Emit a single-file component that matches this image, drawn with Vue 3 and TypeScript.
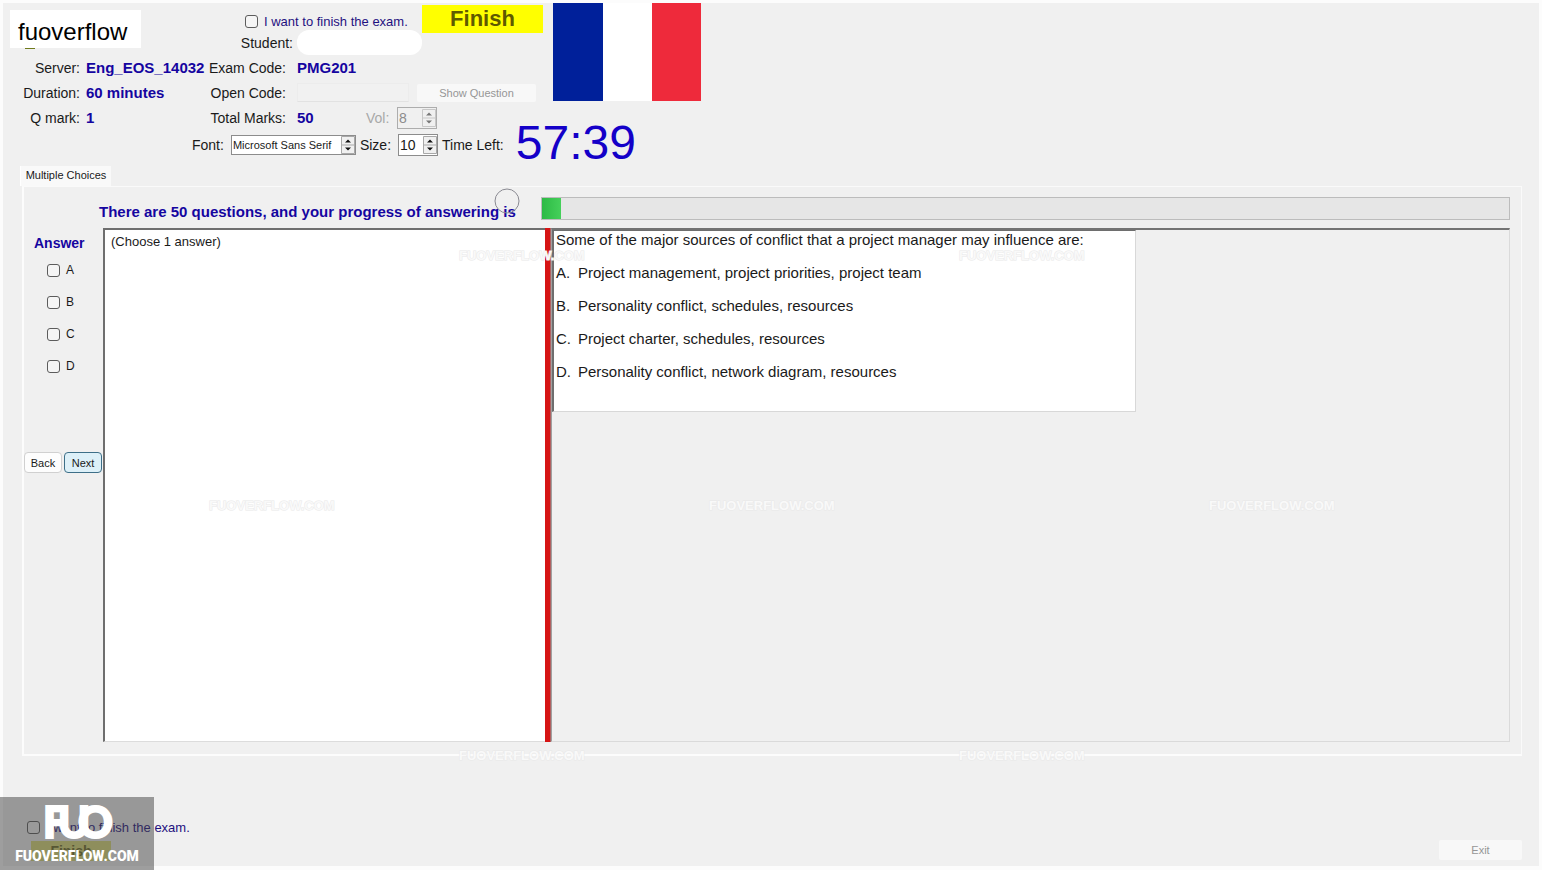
<script setup lang="ts">
import { ref } from 'vue'

interface Choice {
  key: string
  text: string
}

const choices: Choice[] = [
  { key: 'A', text: 'Project management, project priorities, project team' },
  { key: 'B', text: 'Personality conflict, schedules, resources' },
  { key: 'C', text: 'Project charter, schedules, resources' },
  { key: 'D', text: 'Personality conflict, network diagram, resources' },
]

const total = 50
const answered = ref(1)
const picked = ref<string[]>([])
const finishTop = ref(false)
const finishBottom = ref(false)
const volume = ref(8)
const fontSize = ref(10)
const fontName = ref('Microsoft Sans Serif')

const marks = [
  { x: 459, y: 256 },
  { x: 959, y: 256 },
  { x: 209, y: 506 },
  { x: 709, y: 506 },
  { x: 1209, y: 506 },
  { x: 459, y: 756 },
  { x: 959, y: 756 },
]
</script>

<template>
  <main class="window">
    <header class="header">
      <div class="top">
        <section class="col-server">
          <div class="brand">fuoverflow</div>
          <dl class="facts">
            <div><dt>Server:</dt><dd>Eng_EOS_14032</dd></div>
            <div><dt>Duration:</dt><dd>60 minutes</dd></div>
            <div><dt>Q mark:</dt><dd>1</dd></div>
          </dl>
        </section>

        <section class="col-exam">
          <div class="row row-finish">
            <label class="finish-check">
              <input v-model="finishTop" type="checkbox" />
              <span>I want to finish the exam.</span>
            </label>
            <button type="button" class="finish">Finish</button>
          </div>
          <div class="row row-student">
            <span class="label">Student:</span>
            <span class="student"></span>
          </div>
          <div class="row">
            <span class="label">Exam Code:</span>
            <strong>PMG201</strong>
          </div>
          <div class="row">
            <label class="label" for="open-code">Open Code:</label>
            <input id="open-code" class="open-code" type="text" disabled />
            <button type="button" class="flat show" disabled>Show Question</button>
          </div>
          <div class="row">
            <span class="label">Total Marks:</span>
            <strong class="marks">{{ total }}</strong>
            <label class="dim" for="vol">Vol:</label>
            <span class="spin off">
              <input id="vol" v-model="volume" type="number" disabled />
              <svg class="arrows" viewBox="0 0 14 18" aria-hidden="true">
                <path d="M0.5 0.5h13v17h-13zM0 9h14" class="edge" />
                <path d="M4 6.500h6L7 3.500zM4 11.500h6L7 14.500z" class="tri" />
              </svg>
            </span>
          </div>
        </section>

        <svg class="flag" viewBox="0 0 148 98" role="img" aria-label="Flag of France">
          <rect width="50" height="98" fill="#00209a" />
          <rect x="50" width="49" height="98" fill="#fff" />
          <rect x="99" width="49" height="98" fill="#ee2a3b" />
        </svg>
      </div>

      <div class="font-row">
        <label class="before" for="font-name">Font:</label>
        <span class="spin wide">
          <select id="font-name" v-model="fontName">
            <option>Microsoft Sans Serif</option>
          </select>
          <svg class="arrows" viewBox="0 0 14 18" aria-hidden="true">
            <path d="M0.5 0.5h13v17h-13zM0 9h14" class="edge" />
            <path d="M4 6.500h6L7 3.500zM4 11.500h6L7 14.500z" class="tri" />
          </svg>
        </span>
        <label class="before" for="font-size">Size:</label>
        <span class="spin">
          <input id="font-size" v-model="fontSize" type="number" />
          <svg class="arrows" viewBox="0 0 14 18" aria-hidden="true">
            <path d="M0.5 0.5h13v17h-13zM0 9h14" class="edge" />
            <path d="M4 6.500h6L7 3.500zM4 11.500h6L7 14.500z" class="tri" />
          </svg>
        </span>
        <span>Time Left:</span>
        <span class="clock">57:39</span>
      </div>
    </header>

    <div class="tabs" role="tablist">
      <button type="button" role="tab" aria-selected="true" class="tab">Multiple Choices</button>
    </div>

    <section class="panel" role="tabpanel">
      <div class="progress-row">
        <p class="progress-text">
          There are {{ total }} questions, and your progress of answering is
          <svg class="pointer" viewBox="0 0 26 26" aria-hidden="true">
            <circle cx="13" cy="13" r="12" fill="none" stroke="#8a8a92" />
          </svg>
        </p>
        <div class="bar" role="progressbar" :aria-valuenow="answered" :aria-valuemax="total">
          <div class="fill" :style="{ width: (answered / total) * 100 + '%' }"></div>
        </div>
      </div>

      <div class="body">
        <fieldset class="answers">
          <legend>Answer</legend>
          <label v-for="c in choices" :key="c.key">
            <input v-model="picked" type="checkbox" :value="c.key" />
            <span>{{ c.key }}</span>
          </label>
          <div class="nav">
            <button type="button">Back</button>
            <button type="button" class="next">Next</button>
          </div>
        </fieldset>
        <div class="prompt">(Choose 1 answer)</div>
        <div class="splitter"></div>
        <div class="view">
          <article class="question">
            <p>Some of the major sources of conflict that a project manager may influence are:</p>
            <p v-for="c in choices" :key="c.key">
              <span class="key">{{ c.key }}.</span>{{ c.text }}
            </p>
          </article>
        </div>
      </div>
    </section>

    <footer class="footer">
      <div class="footer-left">
        <label class="finish-check">
          <input v-model="finishBottom" type="checkbox" />
          <span>I want to finish the exam.</span>
        </label>
        <button type="button" class="finish small">Finish</button>
      </div>
      <button type="button" class="flat exit" disabled>Exit</button>
    </footer>

    <svg class="marks-layer" aria-hidden="true">
      <text v-for="(m, i) in marks" :key="i" class="mark-word" :x="m.x" :y="m.y + 4">FUOVERFLOW.COM</text>
    </svg>

    <div class="logo">
      <svg viewBox="0 0 154 73" role="img" aria-label="FUO">
        <text class="logo-mark" x="43 58 78" y="41">FUO</text>
        <text class="logo-word" x="77" y="64" text-anchor="middle">FUOVERFLOW.COM</text>
      </svg>
    </div>
  </main>
</template>

<style>
body {
  margin: 0;
  background: #fff;
}
</style>

<style scoped>
.window {
  position: relative;
  box-sizing: border-box;
  min-height: 100vh;
  display: flex;
  flex-direction: column;
  border: 3px solid #fcfcfc;
  border-bottom-width: 4px;
  background: #f0f0f0;
  color: #1a1a1a;
  font-family: "Liberation Sans", Arial, sans-serif;
  font-size: 14px;
}

button,
input,
select {
  font-family: inherit;
  box-sizing: border-box;
  margin: 0;
}

.top {
  display: flex;
  align-items: flex-start;
  height: 127px;
}

.col-server {
  width: 203px;
  flex: none;
}

.brand {
  position: relative;
  box-sizing: border-box;
  width: 131px;
  height: 38px;
  margin: 7px 0 7px 7px;
  padding-left: 8px;
  line-height: 43px;
  font-size: 24px;
  color: #000;
  background: #fff;
}

.brand::after {
  content: "";
  position: absolute;
  left: 15px;
  bottom: -1px;
  width: 10px;
  height: 1px;
  background: #6f7a1c;
}

.facts {
  margin: 0;
}

.facts div {
  display: flex;
  align-items: center;
  gap: 6px;
  height: 25px;
  white-space: nowrap;
}

dt {
  width: 77px;
  flex: none;
  text-align: right;
}

dd {
  margin: 0;
}

dd,
strong {
  font-size: 15px;
  font-weight: bold;
  color: #1505a0;
}

.col-exam {
  width: 347px;
  flex: none;
}

.row {
  display: flex;
  align-items: center;
  height: 25px;
}

.label {
  width: 80px;
  flex: none;
  margin-right: 11px;
  text-align: right;
  white-space: nowrap;
}

.row-finish {
  height: 27px;
  align-items: flex-start;
  padding-left: 39px;
}

.row-student .label {
  width: 87px;
  margin-right: 4px;
}

.finish-check {
  display: flex;
  align-items: center;
  gap: 6px;
  font-size: 13px;
  color: #1f1080;
  white-space: nowrap;
}

.row-finish .finish-check {
  width: 177px;
  height: 36px;
}

input[type="checkbox"] {
  appearance: none;
  flex: none;
  width: 13px;
  height: 13px;
  border: 1px solid #5c5c5c;
  border-radius: 3px;
  background: #f5f5f5;
}

input[type="checkbox"]:checked {
  background: #1505a0;
}

.finish {
  width: 121px;
  height: 28px;
  margin-top: 2px;
  padding: 0;
  border: 0;
  background: #ffff00;
  color: #5f5a00;
  font-size: 22px;
  font-weight: bold;
  line-height: 26px;
}

.student {
  width: 125px;
  height: 25px;
  border-radius: 12px;
  background: #fff;
}

.open-code {
  width: 112px;
  height: 19px;
  border: 1px solid #ececec;
  border-bottom-color: #e2e2e2;
  background: #f1f1f1;
}

.flat {
  padding: 0;
  border: 0;
  border-radius: 2px;
  background: #f8f8f8;
  color: #969696;
  font-size: 11px;
}

.show {
  width: 119px;
  height: 18px;
  margin-left: 8px;
}

.marks {
  width: 69px;
}

.dim {
  width: 31px;
  color: #a8a8a8;
}

.spin {
  box-sizing: border-box;
  display: flex;
  align-items: center;
  width: 40px;
  height: 22px;
  border: 1px solid #8c8c8c;
  background: #fff;
}

.spin.wide {
  width: 125px;
  height: 20px;
}

.spin.off {
  background: #f0f0f0;
  border-color: #adadad;
}

.spin input,
.spin select {
  appearance: none;
  flex: 1;
  min-width: 0;
  height: 18px;
  padding: 0 0 0 1px;
  border: 0;
  background: transparent;
  color: #1a1a1a;
  font-size: 14px;
}

.spin input {
  appearance: textfield;
}

.spin input::-webkit-inner-spin-button {
  appearance: none;
  margin: 0;
}

.spin select {
  font-size: 11px;
}

.spin.off input {
  color: #8c8c8c;
}

.arrows {
  flex: none;
  width: 14px;
  height: 18px;
}

.edge {
  fill: #f0f0f0;
  stroke: #a8a8a8;
}

.tri {
  fill: #111;
}

.off .edge {
  stroke: #c8c8c8;
}

.off .tri {
  fill: #777;
}

.flag {
  flex: none;
  width: 148px;
  height: 98px;
}

.font-row {
  display: flex;
  align-items: center;
  height: 30px;
  padding-left: 189px;
  gap: 4px;
  white-space: nowrap;
}

.before {
  margin-right: 3px;
}

.clock {
  margin: 0 0 4px 8px;
  font-size: 48px;
  line-height: 26px;
  color: #1400c8;
}

.tabs {
  display: flex;
  margin: 6px 0 0 17px;
}

.tab {
  width: 91px;
  height: 20px;
  padding: 0 0 2px;
  border: 0;
  border-left: 1px solid #fff;
  background: #f9f9f9;
  color: #1a1a1a;
  font-size: 11px;
  white-space: nowrap;
}

.panel {
  flex: 1;
  display: flex;
  flex-direction: column;
  margin: 0 17px 0 19px;
  padding: 10px 11px 12px 0;
  border: 1px solid #fafafa;
  border-left: 2px solid #fcfcfc;
  border-bottom: 2px solid #fcfcfc;
}

.progress-row {
  display: flex;
  align-items: flex-end;
  height: 23px;
  margin-bottom: 8px;
}

.progress-text {
  position: relative;
  box-sizing: border-box;
  width: 517px;
  flex: none;
  margin: 0;
  padding-left: 75px;
  font-size: 15px;
  font-weight: bold;
  line-height: 16px;
  color: #1505a0;
  white-space: nowrap;
}

.pointer {
  position: absolute;
  right: 21px;
  bottom: 6px;
  width: 26px;
  height: 26px;
}

.bar {
  box-sizing: border-box;
  flex: 1;
  height: 23px;
  border: 1px solid #bcbcbc;
  background: #e6e6e6;
}

.fill {
  height: 100%;
  background: linear-gradient(90deg, #2dba45, #45d05a);
}

.body {
  flex: 1;
  display: grid;
  grid-template-columns: 79px minmax(0, 442fr) 6px minmax(0, 959fr);
}

.answers {
  margin: 0;
  padding: 0;
  border: 0;
  min-width: 0;
}

.answers legend {
  float: left;
  width: 100%;
  padding: 6px 0 2px 10px;
  box-sizing: border-box;
  font-size: 14px;
  font-weight: bold;
  line-height: 18px;
  color: #1505a0;
}

.answers label {
  clear: both;
  display: flex;
  align-items: center;
  gap: 6px;
  height: 32px;
  padding-left: 23px;
  font-size: 12px;
}

.nav {
  display: flex;
  gap: 2px;
  margin-top: 70px;
}

.nav button {
  width: 38px;
  height: 21px;
  padding: 0;
  border: 1px solid #d0d0d0;
  border-radius: 4px;
  background: #fdfdfd;
  color: #1a1a1a;
  font-size: 11px;
}

.nav .next {
  border-color: #3d6f88;
  background: #ddf0f8;
}

.prompt {
  padding: 4px 6px;
  border: 1px solid #dcdcdc;
  border-top: 2px solid #6e6e6e;
  border-left: 2px solid #6e6e6e;
  border-right: 0;
  background: #fff;
  font-size: 13px;
  line-height: 16px;
}

.splitter {
  border-right: 1px solid #b06060;
  background: #d61414;
}

.view {
  border: 1px solid #dadada;
  border-top: 2px solid #747474;
  border-left: 1px solid #a0a0a0;
}

.question {
  box-sizing: border-box;
  width: 61%;
  min-height: 182px;
  padding: 0 2px;
  border: 1px solid #d8d8d8;
  border-top-color: #6e6e6e;
  border-left: 2px solid #6e6e6e;
  background: #fff;
  font-size: 15px;
  line-height: 18px;
}

.question p {
  margin: 0 0 15px;
}

.key {
  display: inline-block;
  width: 22px;
}

.footer {
  display: flex;
  align-items: flex-end;
  justify-content: space-between;
  height: 110px;
}

.footer-left {
  display: flex;
  flex-direction: column;
  padding: 0 0 5px 24px;
}

.finish.small {
  width: 80px;
  height: 20px;
  margin: 6px 0 0 4px;
  background: #dcdc78;
  color: #6c6c28;
  font-size: 14px;
  line-height: 16px;
}

.exit {
  width: 83px;
  height: 20px;
  margin: 0 17px 6px 0;
}

.marks-layer {
  position: absolute;
  inset: -3px;
  width: calc(100% + 6px);
  height: calc(100% + 7px);
  pointer-events: none;
}

.mark-word {
  font-size: 13px;
  font-weight: bold;
  fill: #f9f9f9;
  stroke: #e9e9e9;
  stroke-width: 1px;
  paint-order: stroke;
}

.logo {
  position: absolute;
  left: -3px;
  bottom: -4px;
  width: 154px;
  height: 73px;
  background: rgba(64, 64, 64, 0.5);
  pointer-events: none;
}

.logo svg {
  display: block;
  width: 154px;
  height: 73px;
}

.logo-mark {
  font-family: Lato, "Liberation Sans", sans-serif;
  font-size: 43px;
  font-weight: 900;
  fill: #fff;
  stroke: #fff;
  stroke-width: 2px;
}

.logo-word {
  font-family: Roboto, "Liberation Sans", sans-serif;
  font-size: 14px;
  font-weight: 900;
  fill: #fff;
}
</style>
